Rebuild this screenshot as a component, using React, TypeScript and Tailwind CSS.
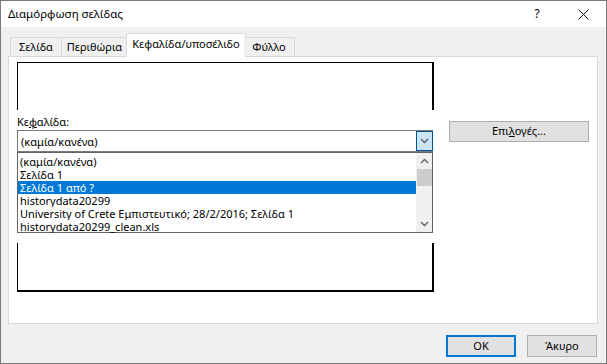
import React from "react";

const font = { fontFamily: '"Noto Sans", "DejaVu Sans", sans-serif' };

function Chevron({ up = false }: { up?: boolean }) {
  return (
    <svg width="9" height="6" viewBox="0 0 9 6" className="block">
      {up ? (
        <path d="M1 5 L4.5 1.5 L8 5" fill="none" stroke="#606060" strokeWidth="1.4" />
      ) : (
        <path d="M1 1 L4.5 4.5 L8 1" fill="none" stroke="#606060" strokeWidth="1.4" />
      )}
    </svg>
  );
}

export default function App() {
  const items = [
    "(καμία/κανένα)",
    "Σελίδα 1",
    "Σελίδα 1 από ?",
    "historydata20299",
    "University of Crete Εμπιστευτικό; 28/2/2016; Σελίδα 1",
    "historydata20299_clean.xls",
  ];
  return (
    <div
      className="w-[607px] h-[364px] border border-[#7a7a7a] bg-[#f0f0f0] flex flex-col text-[11px] text-black overflow-hidden"
      style={font}
    >
      {/* Title bar */}
      <div className="h-[26px] bg-white flex items-center shrink-0">
        <div className="pl-[7px] flex-1 leading-none text-[11.5px]">Διαμόρφωση σελίδας</div>
        <div className="w-[46px] flex justify-center text-[12px]">?</div>
        <div className="w-[46px] flex justify-center">
          <svg width="11" height="11" viewBox="0 0 11 11">
            <path d="M0.5 0.5 L10.5 10.5 M10.5 0.5 L0.5 10.5" stroke="#111" strokeWidth="1" />
          </svg>
        </div>
      </div>

      {/* Body */}
      <div className="flex-1 flex flex-col pl-[7px] pr-[8px] pt-[6px]">
        {/* Tabs */}
        <div className="h-[23px] flex items-end pl-[2px] relative z-10">
          <div className="h-[19px] w-[52px] border border-b-0 border-[#d9d9d9] bg-[#f0f0f0] flex items-center justify-center">
            Σελίδα
          </div>
          <div className="h-[19px] w-[66px] border border-b-0 border-l-0 border-[#d9d9d9] bg-[#f0f0f0] flex items-center justify-center">
            Περιθώρια
          </div>
          <div className="h-[24px] w-[120px] -mb-px -ml-[2px] border border-b-0 border-[#d9d9d9] bg-white flex items-center justify-center pb-[2px]">
            Κεφαλίδα/υποσέλιδο
          </div>
          <div className="h-[19px] w-[51px] -ml-[2px] border border-b-0 border-l-0 border-[#d9d9d9] bg-[#f0f0f0] flex items-center justify-center">
            Φύλλο
          </div>
        </div>

        {/* Panel */}
        <div className="h-[268px] bg-white border border-[#d9d9d9] flex pl-[8px] pt-[5px]">
          <div className="w-[417px] flex flex-col">
            <div className="h-[48px] border-t border-l border-r-2 border-black" />
            <div className="mt-[5px] leading-[14px] h-[14px]">
              Κε<span className="underline">φ</span>αλίδα:
            </div>
            <div className="relative mt-[1px] h-[22px] w-[416px]">
              <div className="h-full border border-[#7a7a7a] bg-white flex items-center">
                <div className="flex-1 pl-[3px] leading-none">(καμία/κανένα)</div>
                <div className="w-[17px] h-[20px] bg-[#cce4f7] border border-[#005499] flex items-center justify-center -mr-px">
                  <Chevron />
                </div>
              </div>
              {/* Dropdown list */}
              <div className="absolute left-0 top-full w-[416px] h-[81px] bg-white border border-[#646464] flex z-20">
                <div className="flex-1 pt-[2px]">
                  {items.map((t, i) => (
                    <div
                      key={i}
                      className={
                        "h-[13px] leading-[13px] pl-[2px] whitespace-nowrap overflow-hidden " +
                        (i === 2 ? "bg-[#0078d7] text-white" : "")
                      }
                    >
                      {t}
                    </div>
                  ))}
                </div>
                <div className="w-[16px] bg-[#f0f0f0] flex flex-col items-center">
                  <div className="h-[16px] flex items-center justify-center">
                    <Chevron up />
                  </div>
                  <div className="w-[15px] h-[17px] bg-[#cdcdcd]" />
                  <div className="flex-1" />
                  <div className="h-[16px] flex items-center justify-center">
                    <Chevron />
                  </div>
                </div>
              </div>
            </div>
            <div className="mt-[91px] h-[49px] border-l border-r-2 border-b-2 border-black" />
          </div>
          <div className="pl-[15px] pt-[59px]">
            <div className="w-[140px] h-[21px] bg-[#e1e1e1] border border-[#adadad] flex items-center justify-center">
              Επι<span className="underline">λ</span>ογές...
            </div>
          </div>
        </div>

        {/* Footer buttons */}
        <div className="flex justify-end gap-[11px] mt-[11px] pr-[1px]">
          <div className="w-[70px] h-[22px] bg-[#e1e1e1] border-2 border-[#0078d7] flex items-center justify-center">
            OK
          </div>
          <div className="w-[70px] h-[22px] bg-[#e1e1e1] border border-[#adadad] flex items-center justify-center">
            Άκυρο
          </div>
        </div>
      </div>
    </div>
  );
}
